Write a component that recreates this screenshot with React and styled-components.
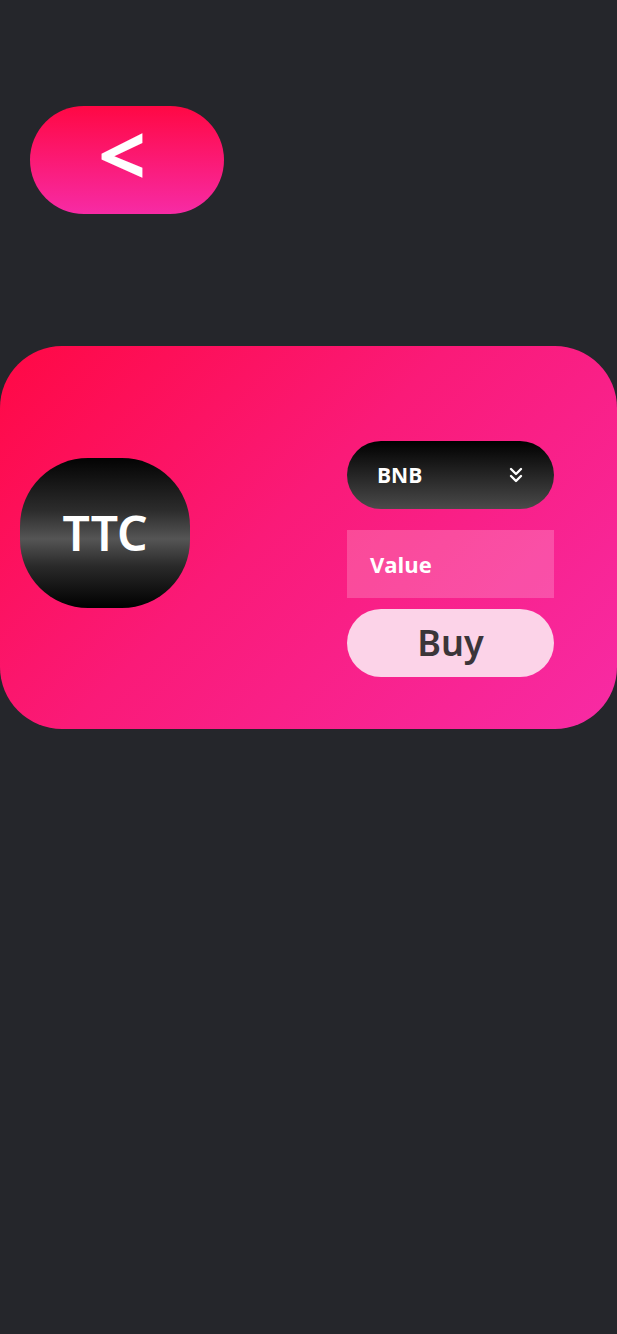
import React from "react";
import styled, { createGlobalStyle } from "styled-components";
import { ChevronsDown } from "lucide-react";

const Global = createGlobalStyle`
  html, body { margin: 0; padding: 0; background: #25262b; }
  body { font-family: "Open Sans", "Noto Sans", sans-serif; }
  * { box-sizing: border-box; }
`;

const Page = styled.div`
  min-height: 1334px;
  width: 617px;
  background: #25262b;
  padding-top: 106px;
  display: flex;
  flex-direction: column;
`;

const BackButton = styled.button`
  margin-left: 30px;
  width: 194px;
  height: 108px;
  border: none;
  border-radius: 54px;
  background: linear-gradient(180deg, #ff0844 0%, #f72ba5 100%);
  color: #fff;
  font-family: "Open Sans", sans-serif;
  font-weight: 700;
  font-size: 84px;
  line-height: 1;
  display: flex;
  align-items: center;
  justify-content: center;
  padding: 0 10px 12px 0;
  cursor: pointer;
`;

const Card = styled.section`
  margin-top: 132px;
  width: 617px;
  height: 383px;
  border-radius: 62px;
  background: linear-gradient(135deg, #ff0844 0%, #fa1a78 45%, #f72ba5 100%);
  display: flex;
  align-items: flex-start;
  justify-content: space-between;
  padding: 95px 63px 0 20px;
`;

const Coin = styled.div`
  margin-top: 17px;
  width: 170px;
  height: 150px;
  border-radius: 68px;
  background: linear-gradient(180deg, #030303 0%, #2c2c2c 35%, #555 54%, #2a2a2a 72%, #000 100%);
  color: #fff;
  font-family: "Noto Sans", "Open Sans", sans-serif;
  font-weight: 600;
  font-size: 48px;
  display: flex;
  align-items: center;
  justify-content: center;
  padding-bottom: 2px;
`;

const Controls = styled.div`
  width: 207px;
  display: flex;
  flex-direction: column;
`;

const Select = styled.div`
  height: 68px;
  border-radius: 34px;
  background: linear-gradient(180deg, #000 0%, #4a4a4a 100%);
  color: #fff;
  font-weight: 700;
  font-size: 21px;
  display: flex;
  align-items: center;
  justify-content: space-between;
  padding: 0 26px 0 30px;
`;

const ValueField = styled.div`
  margin-top: 21px;
  height: 68px;
  background: rgba(255, 255, 255, 0.2);
  color: #fff;
  font-weight: 700;
  font-size: 22px;
  display: flex;
  align-items: center;
  padding-left: 23px;
`;

const BuyButton = styled.button`
  margin-top: 11px;
  height: 68px;
  border: none;
  border-radius: 34px;
  background: #fcd3e8;
  color: #3b3539;
  font-family: "Noto Sans", "Open Sans", sans-serif;
  font-weight: 600;
  font-size: 36px;
  display: flex;
  align-items: center;
  justify-content: center;
  padding: 0 0 2px;
  cursor: pointer;
`;

export default function App() {
  return (
    <>
      <Global />
      <Page>
        <BackButton>&lt;</BackButton>
        <Card>
          <Coin>TTC</Coin>
          <Controls>
            <Select>
              <span>BNB</span>
              <ChevronsDown size={24} strokeWidth={2.4} color="#fff" />
            </Select>
            <ValueField>Value</ValueField>
            <BuyButton>Buy</BuyButton>
          </Controls>
        </Card>
      </Page>
    </>
  );
}
